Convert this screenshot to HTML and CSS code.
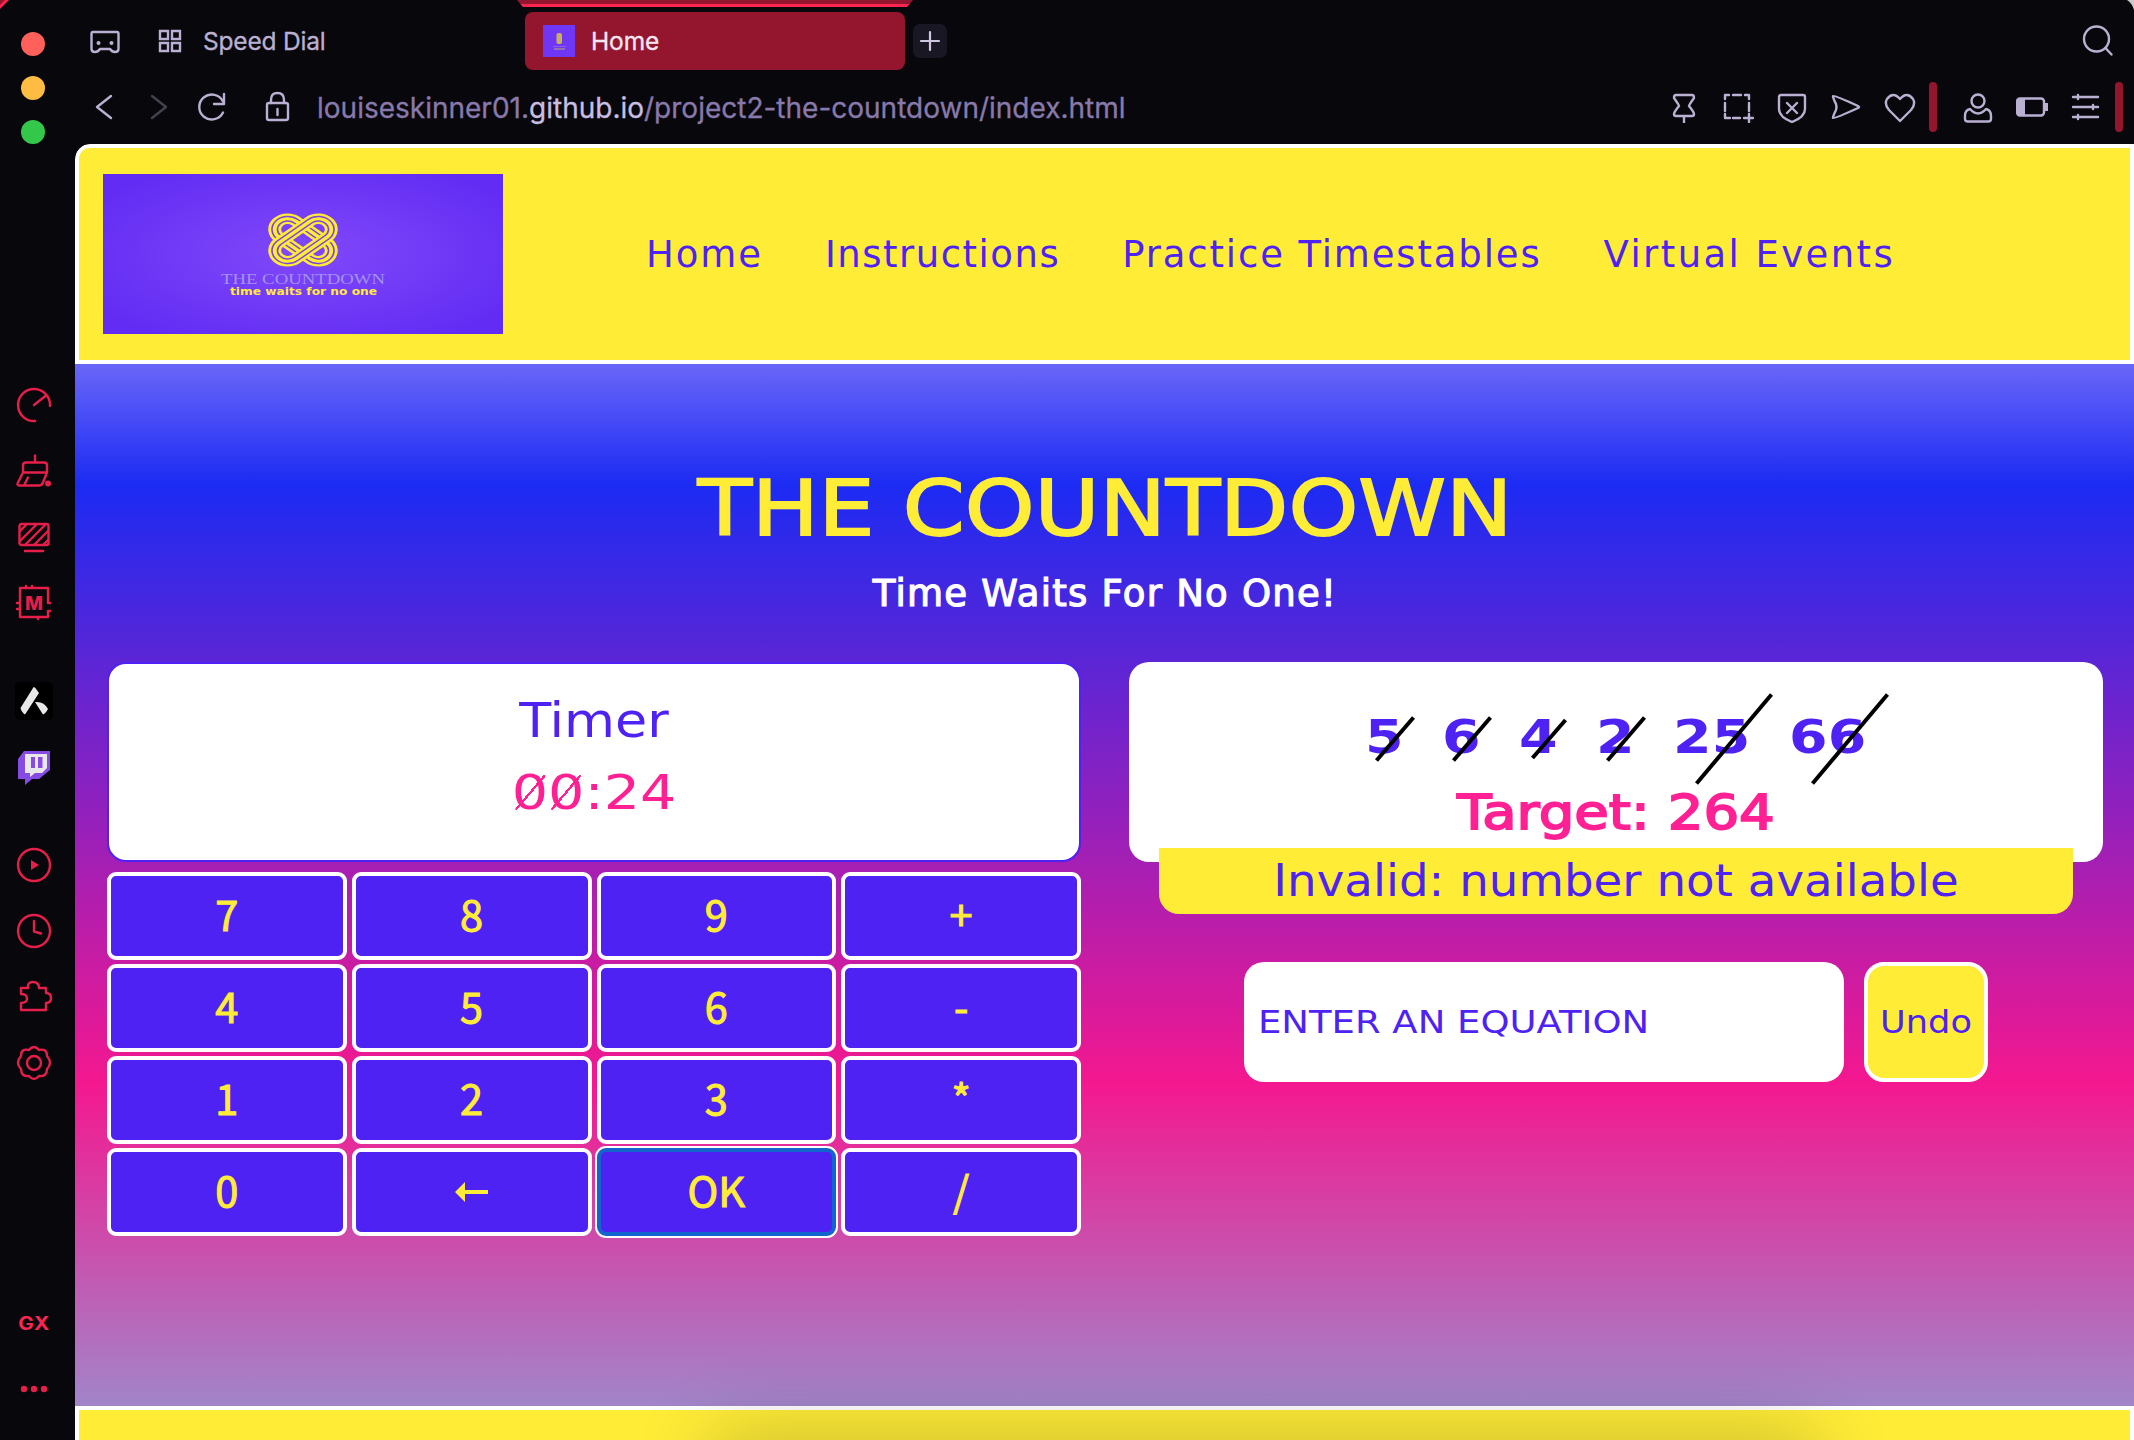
FILE: index.html
```html
<!DOCTYPE html>
<html lang="en">
<head>
<meta charset="utf-8">
<title>Home</title>
<link rel="stylesheet" href="styles.css">
</head>
<body>
<div class="window">
  <svg class="corner corner-left" viewBox="0 0 10 10"><path d="M0 0H9L0 9Z" fill="#ff2450"/><path d="M0 0H5L0 5Z" fill="#94152e"/></svg>
  <svg class="corner corner-right" viewBox="0 0 10 10"><path d="M3 0H10V10Q8 3 3 0Z" fill="#c9c9cb"/></svg>

  <aside class="sidebar">
    <div class="lights"><i class="light red"></i><i class="light amber"></i><i class="light green"></i></div>
    <div class="side-group tools">
      <svg viewBox="0 0 38 38"><path d="M35 20A16 16 0 1 0 20 35M19 19 31 9.500"/></svg>
      <svg viewBox="0 -1.5 38 38"><path d="M20 2V9M11 9H29Q32 9 32 12V19H8V12Q8 9 11 9ZM8 19 2.500 30Q2 32 5 32H24Q27 32 28 29L32 19M13 24 9.500 31"/><circle class="solid" cx="33" cy="30" r="3"/></svg>
      <svg viewBox="0 -1 38 38"><rect x="4.500" y="5" width="29" height="21" rx="2"/><path d="M5 12 11 6M5 22 21 6M10 26 30 6M19 26 33 12M28 26 33 21M10 32H28"/></svg>
      <svg viewBox="0 0 38 38"><path d="M35 19H33V4H5V33H33V27H35M11 2V4M17 2V4M2 19H5M2 25H5M23 33V35"/><text class="chip" x="19" y="26">M</text></svg>
    </div>
    <div class="side-group apps">
      <svg viewBox="0 0 38 38"><rect class="tile" width="38" height="38" rx="5"/><path class="pale" d="M19 5Q20 5 24 11L11 31Q10 33 9 32Q6 29 5.500 26L18 6Q18.500 5 19 5ZM20 20Q29 19 33 27Q31 31 29 32Q28 33 27 31Z"/></svg>
      <svg viewBox="0 -2 38 38"><path class="twitch" d="M9 1H35V20L24 29H17L10 35V29H3V9Z"/><path class="pale" d="M10 4H32V18L27 23H20L15 27V23H10Z"/><path class="twitch" d="M16 7H20V18H16ZM23 7H27.500V18H23Z"/></svg>
    </div>
    <div class="side-group tools">
      <svg viewBox="0 0 38 38"><circle cx="19" cy="19" r="16"/><path class="solid" d="M16 14V24L24 19Z"/></svg>
      <svg viewBox="0 0 38 38"><circle cx="19" cy="19" r="16"/><path d="M19 9V19.500L26 21.500"/></svg>
      <svg viewBox="0 0 38 38"><path d="M6 10H13Q12 4 18 4T24 10H31V15Q36 15 36 20T31 25V32H6V25Q12 25 12 20.500T6 16Z"/></svg>
      <svg viewBox="0 0 38 38"><path d="M14 6Q19 0 24 6Q32 4 32 12Q38 19 32 25Q32 33 24 32Q19 38 14 32Q6 33 6 25Q0 19 6 12Q6 4 14 6Z"/><circle cx="19" cy="19" r="7"/></svg>
    </div>
    <div class="side-group tail">
      <span class="gx">GX</span>
      <svg viewBox="0 0 38 38"><circle class="solid" cx="9" cy="19" r="3.200"/><circle class="solid" cx="19" cy="19" r="3.200"/><circle class="solid" cx="29" cy="19" r="3.200"/></svg>
    </div>
  </aside>

  <div class="browser">
    <div class="tabbar">
      <div class="tab-accent"></div>
      <svg class="ic corners-ic" viewBox="0 0 32 32"><path d="M4 6H28Q29.500 6 29.500 8V23Q29.500 26 26 26Q23 26 21 23H11Q9 26 6 26Q2.500 26 2.500 23V8Q2.500 6 4 6Z"/><circle class="fillc" cx="9.500" cy="17" r="2"/><circle class="fillc" cx="22.500" cy="17" r="2"/></svg>
      <svg class="ic grid-ic" viewBox="0 0 32 32"><path d="M6 6H14V14H6ZM18 6H26V14H18ZM6 18H14V26H6ZM18 18H26V26H18Z"/></svg>
      <span class="speed">Speed Dial</span>
      <div class="tab">
        <svg class="favicon" viewBox="0 0 32 32"><rect width="32" height="32" fill="#6f37f5"/><rect x="13.500" y="8" width="5.500" height="11" rx="2" fill="#cbb05b"/><path d="M10 21.500H23" stroke="#8d62dc"/><path d="M11 24H22" stroke="#c5a57b"/></svg>
        <span>Home</span>
      </div>
      <div class="plus"><svg viewBox="0 0 34 34"><path d="M17 8V26M8 17H26"/></svg></div>
      <svg class="ic search" viewBox="0 0 32 32"><circle cx="14.500" cy="14" r="12.500"/><path d="M23.500 23 29.500 29.500"/></svg>
    </div>
    <div class="addressbar">
      <svg class="ic back" viewBox="0 0 32 32"><path d="M22 5 8 16 22 27"/></svg>
      <svg class="ic fwd" viewBox="0 0 32 32"><path d="M10 5 24 16 10 27"/></svg>
      <svg class="ic reload" viewBox="0 0 32 32"><path d="M27 21.500A12.500 12.500 0 1 1 27 10.500M28 3V13H18"/></svg>
      <svg class="ic lock" viewBox="0 0 32 32"><rect x="6" y="12" width="21" height="17" rx="2"/><path d="M10 12V9Q10 2 16.500 2T23 9V12M16.500 18V24"/></svg>
      <span class="url">louiseskinner01.<b>github.io</b>/project2-the-countdown/index.html</span>
      <div class="actions">
        <svg class="ic" viewBox="0 0 32 32"><path d="M8 4H24Q26 4 26 7Q21 14 21 15Q26 21 26 23Q26 25 24 25H8Q6 25 6 23Q6 21 11 15Q11 14 6 7Q6 4 8 4ZM16 25V32"/></svg>
        <svg class="ic" viewBox="0 0 32 32"><path d="M3 8V4H7M11 4H19M23 4H27V8M3 12V20M27 12V20M3 23V27H8M11 27H18M22 27H31M27 23V31"/></svg>
        <svg class="ic" viewBox="0 0 32 32"><path d="M5 4H27Q29 4 29 6V18Q29 26 16 31Q3 26 3 18V6Q3 4 5 4ZM11 12 21 22M21 12 11 22"/></svg>
        <svg class="ic" viewBox="0 0 32 32"><path d="M3 5Q4 4 28 15Q30 16 28 17Q4 28 3 27Q3 25 6 19Q7 16 6 13Q3 7 3 5Z"/></svg>
        <svg class="ic" viewBox="0 0 32 32"><path d="M16 30 5 19Q0 13 3 8Q9 0 16 8Q23 0 29 8Q32 13 27 19Z"/></svg>
        <i class="bar"></i>
        <svg class="ic user" viewBox="0 0 32 32"><circle cx="16" cy="10" r="6.500"/><path d="M8 18Q3 19 3 25V28Q3 30.500 6 30.500H26Q29 30.500 29 28V25Q29 19 24 18Q16 27 8 18Z"/></svg>
        <svg class="ic" viewBox="0 0 32 32"><rect x="1" y="7.500" width="27" height="17" rx="3"/><path class="fillc" d="M2 8H9V24H2ZM28 12H32V20H28Z"/></svg>
        <svg class="ic" viewBox="0 0 32 32"><path d="M3 6H28M3 16H28M3 26H28M8 4V8M23 14V18M8 24V28"/></svg>
        <i class="bar last"></i>
      </div>
    </div>

    <div class="page">
      <header class="site-header">
        <svg class="logo" viewBox="0 0 400 160">
          <defs>
            <radialGradient id="glow" cx=".5" cy=".5" r=".62"><stop offset="0" stop-color="#8149f9"/><stop offset="1" stop-color="#622cf4"/></radialGradient>
            <rect id="loop" x="-30.500" y="-12" width="61" height="24" rx="12"/>
          </defs>
          <rect width="400" height="160" fill="url(#glow)"/>
          <g transform="translate(200 66) scale(1.08 .89)" fill="none">
            <g transform="rotate(40)"><use href="#loop" stroke="#ffeb37" stroke-width="12"/><use href="#loop" stroke="#7b45e0" stroke-width="6.600"/><use href="#loop" stroke="#ffeb37" stroke-width="3.600"/></g>
            <g transform="rotate(-40)"><use href="#loop" stroke="#ffeb37" stroke-width="12"/><use href="#loop" stroke="#7b45e0" stroke-width="6.600"/><use href="#loop" stroke="#ffeb37" stroke-width="3.600"/></g>
          </g>
          <text class="logo-name" x="118" y="110" textLength="164" lengthAdjust="spacingAndGlyphs">THE COUNTDOWN</text>
          <text class="logo-tag" x="127" y="121" textLength="147" lengthAdjust="spacingAndGlyphs">time waits for no one</text>
        </svg>
        <nav class="nav">
          <a class="n1">Home</a><a class="n2">Instructions</a><a class="n3">Practice Timestables</a><a class="n4">Virtual Events</a>
        </nav>
      </header>

      <main class="game">
        <h1>THE COUNTDOWN</h1>
        <h2>Time Waits For No One!</h2>
        <div class="columns">
          <section class="left">
            <div class="timer">
              <p class="label">Timer</p>
              <p class="clock"><span class="zero">0</span><span class="zero">0</span>:24</p>
            </div>
            <div class="keys">
              <button>7</button><button>8</button><button>9</button><button>+</button>
              <button>4</button><button>5</button><button>6</button><button>-</button>
              <button>1</button><button>2</button><button>3</button><button>*</button>
              <button>0</button><button class="arrow"><svg viewBox="0 0 34 20"><path d="M0 10 10 0V8H33V12H10V20Z"/></svg></button><button class="focused">OK</button><button>/</button>
            </div>
          </section>
          <section class="right">
            <div class="board">
              <div class="numbers">
                <span class="num"><b>5</b><svg viewBox="0 0 40 46"><path d="M1.500 44.500 38.500 1.500"/></svg></span>
                <span class="num"><b>6</b><svg viewBox="0 0 40 46"><path d="M1.500 44.500 38.500 1.500"/></svg></span>
                <span class="num"><b>4</b><svg viewBox="0 0 40 46"><path d="M3.500 42 36.500 4"/></svg></span>
                <span class="num"><b>2</b><svg viewBox="0 0 40 46"><path d="M1.500 44.500 38.500 1.500"/></svg></span>
                <span class="num wide"><b>25</b><svg viewBox="0 0 78 92"><path d="M1.500 90.500 76.500 1.500"/></svg></span>
                <span class="num wide"><b>66</b><svg viewBox="0 0 78 92"><path d="M1.500 90.500 76.500 1.500"/></svg></span>
              </div>
              <p class="target">Target: 264</p>
            </div>
            <div class="message"><span>Invalid: number not available</span></div>
            <div class="entry">
              <div class="field"><span>ENTER AN EQUATION</span></div>
              <button class="undo"><span>Undo</span></button>
            </div>
          </section>
        </div>
      </main>
      <footer class="site-footer"><div class="footer-shade"></div></footer>
    </div>
  </div>
</div>
</body>
</html>
```
FILE: styles.css
```css
* { box-sizing: border-box; }
body { margin: 0; background: #08070c; font-family: Inter, sans-serif; }
p, h1, h2 { margin: 0; }
.window { position: relative; display: flex; width: 2134px; height: 1440px; overflow: hidden; background: #08070c; }
.corner { position: absolute; top: 0; width: 10px; height: 10px; }
.corner-left { left: 0; }
.corner-right { right: 0; }

/* sidebar */
.sidebar { flex: none; width: 75px; padding: 22px 7px 0 0; display: flex; flex-direction: column; align-items: center; }
.lights { display: flex; flex-direction: column; margin-right: 3px; }
.light { width: 24px; height: 24px; margin: 10px 0; border-radius: 50%; }
.red { background: #ff6059; }
.amber { background: #ffbc42; }
.green { background: #34c84b; }
.side-group { display: flex; flex-direction: column; }
.side-group svg { width: 38px; height: 38px; margin: 14px 0; fill: none; stroke: #e51f4a; stroke-width: 2.4; stroke-linecap: round; stroke-linejoin: round; }
.side-group .solid { fill: #e51f4a; stroke: none; }
.side-group .tile { fill: #000; stroke: none; }
.side-group .pale { fill: #e8e7e9; stroke: none; }
.side-group .twitch { fill: #874be5; stroke: none; }
.side-group .chip { font: 800 19px Inter, sans-serif; fill: #e51f4a; stroke: none; text-anchor: middle; }
.tools { margin-top: 218px; }
.apps { margin-top: 32px; }
.apps + .tools { margin-top: 32px; }
.tail { margin-top: 194px; align-items: center; }
.gx { height: 66px; line-height: 66px; color: #fa2752; font-weight: 700; font-size: 18.5px; letter-spacing: .5px; transform: scaleX(1.12); }

/* browser chrome */
.browser { flex: 1; min-width: 0; }
.tabbar { position: relative; height: 82px; padding: 12px 0; display: flex; align-items: center; color: #bab0d2; }
.tab-accent { position: absolute; left: 442px; top: 0; width: 396px; height: 7px; background: linear-gradient(#94152e 4px, #ff2450 4px); clip-path: polygon(0 0, 100% 0, 98.5% 100%, 1.5% 100%); }
.ic { flex: none; width: 32px; height: 32px; fill: none; stroke: #bab0d2; stroke-width: 2.4; stroke-linecap: round; stroke-linejoin: round; }
.ic .fillc { fill: #bab0d2; stroke: none; }
.corners-ic { margin: 2px 0 0 14px; }
.grid-ic { margin-left: 33px; }
.grid-ic path { stroke-linejoin: miter; }
.speed { width: 322px; margin-left: 17px; font-size: 24.5px; letter-spacing: -.2px; -webkit-text-stroke: .3px; white-space: nowrap; }
.tab { flex: none; width: 380px; height: 58px; border-radius: 8px; background: #94152e; display: flex; align-items: center; gap: 16px; padding-left: 18px; color: #f3e6f0; font-size: 24.5px; letter-spacing: -.1px; -webkit-text-stroke: .3px; }
.favicon { width: 32px; height: 32px; }
.plus { width: 34px; height: 34px; margin-left: 8px; border-radius: 7px; background: #1a1724; }
.plus svg { display: block; width: 34px; height: 34px; fill: none; stroke: #cfc6e2; stroke-width: 2.2; stroke-linecap: round; }
.search { margin: 0 20px 0 auto; }
.addressbar { height: 62px; padding-bottom: 12px; display: flex; align-items: center; }
.back { margin-left: 14px; }
.fwd { margin-left: 21px; stroke: #45424e; }
.reload { margin-left: 22px; }
.lock { margin-left: 33px; }
.url { margin: 2px 0 0 24px; font-size: 28px; color: #8879ab; -webkit-text-stroke: .3px; white-space: nowrap; }
.url b { font-weight: 400; color: #c8bee0; }
.actions { margin-left: auto; padding-right: 11px; display: flex; align-items: center; gap: 22px; }
.bar { width: 8px; height: 50px; margin-left: -9px; border-radius: 4px; background: #94152e; }
.user { margin-left: 3px; }

/* site header */
.page { height: 1296px; overflow: hidden; border-top-left-radius: 15px; display: flex; flex-direction: column; }
.site-header { flex: none; height: 220px; border: 4px solid #fff; border-top-left-radius: 15px; background: #ffec37; display: flex; align-items: center; padding: 0 24px; }
.logo { width: 400px; height: 160px; }
.logo-name { font: 14px "Liberation Serif", serif; fill: #a492ef; }
.logo-tag { font: bold 10.5px "DejaVu Sans", sans-serif; fill: #ffec37; }
.nav { display: flex; margin-left: 143px; gap: 62px; color: #4e22f2; font: 37px "DejaVu Sans", sans-serif; white-space: nowrap; }
.n1 { letter-spacing: 1.9px; }
.n2 { letter-spacing: 1.5px; }
.n3 { letter-spacing: 1.85px; }
.n4 { letter-spacing: 2.4px; }

/* game area */
.game { flex: none; height: 1042px; padding: 100px 31px 0 32px; background: linear-gradient(#6966f8 0, #1c2bf3 11.6%, #f4188f 69%, #a285c9 100%); font-family: "DejaVu Sans", sans-serif; }
h1 { text-align: center; color: #ffec37; font-size: 77px; font-weight: 400; line-height: 90px; -webkit-text-stroke: 1.8px #ffec37; transform: scaleX(1.152); }
h2 { margin-top: 15px; text-align: center; color: #fff; font-size: 37px; font-weight: 400; line-height: 50px; -webkit-text-stroke: 1.2px #fff; letter-spacing: 1.25px; }
.columns { margin-top: 43px; display: flex; justify-content: space-between; }
.left, .right { width: 974px; }
.timer { height: 200px; padding-top: 26px; border: 2px solid #4e22f2; border-radius: 19px; background: #fff; text-align: center; font-size: 48px; }
.label { line-height: 60px; color: #4e22f2; transform: scaleX(1.09); }
.clock { margin-top: 12px; line-height: 60px; color: #ff2094; transform: scaleX(1.19); }
.zero { background: linear-gradient(to top left, transparent 47.5%, #ff2094 47.5%, #ff2094 52.5%, transparent 52.5%) 3px 11px / 25px 35px no-repeat; }
.keys { margin-top: 10px; display: grid; grid-template-columns: repeat(4, 1fr); grid-auto-rows: 88px; gap: 4px 5px; }
.keys button { padding: 0 0 7px; border: 4px solid #fff; border-radius: 9px; background: #4e22f2; color: #ffec37; font: 41.5px "Noto Sans CJK JP", sans-serif; line-height: 72px; -webkit-text-stroke: 1px #ffec37; }
.keys .focused { border-color: #1165cd; outline: 2px solid #fff; outline-offset: 0; }
.arrow svg { width: 34px; height: 20px; fill: #ffec37; vertical-align: middle; margin-bottom: 6px; }

.board { height: 200px; padding-top: 50px; border-radius: 20px; background: #fff; text-align: center; }
.numbers { display: flex; justify-content: center; gap: 43px; height: 50px; line-height: 50px; color: #4e22f2; font-size: 47px; }
.num { position: relative; display: flex; justify-content: center; width: 34px; }
.num b { transform: scaleX(1.18); }
.num svg { position: absolute; left: 7px; top: 4px; width: 40px; height: 46px; fill: none; stroke: #000; stroke-width: 4; }
.num.wide { width: 73px; }
.num.wide svg { left: 19px; top: -19px; width: 78px; height: 92px; }
.target { margin-top: 25px; line-height: 50px; color: #ff2094; font-size: 48px; -webkit-text-stroke: 1.8px #ff2094; transform: scaleX(1.17); }
.message { width: 914px; height: 66px; margin: -14px auto 0; position: relative; border-radius: 0 0 20px 20px; background: #ffec37; color: #4e22f2; text-align: center; font-size: 44px; line-height: 66px; }
.message span { display: block; transform: scaleX(1.062); }
.entry { margin: 48px 115px 0; display: flex; justify-content: space-between; }
.field { width: 600px; height: 120px; padding-left: 14px; border-radius: 20px; background: #fff; color: #4e22f2; font-size: 32px; line-height: 120px; white-space: nowrap; }
.field span { display: inline-block; transform: scaleX(1.155); transform-origin: left; }
.undo { width: 124px; height: 120px; padding: 0; border: 4px solid #fff; border-radius: 20px; background: #ffec37; color: #4e22f2; font: 32px "DejaVu Sans", sans-serif; }
.undo span { display: block; transform: scaleX(1.1); }

/* footer */
.site-footer { position: relative; flex: none; height: 60px; border: 4px solid #fff; background: #ffec37; }
.footer-shade { position: absolute; left: 645px; top: 34px; width: 1080px; height: 100px; box-shadow: 0 0 80px 12px rgba(0, 0, 0, .2); }
```
